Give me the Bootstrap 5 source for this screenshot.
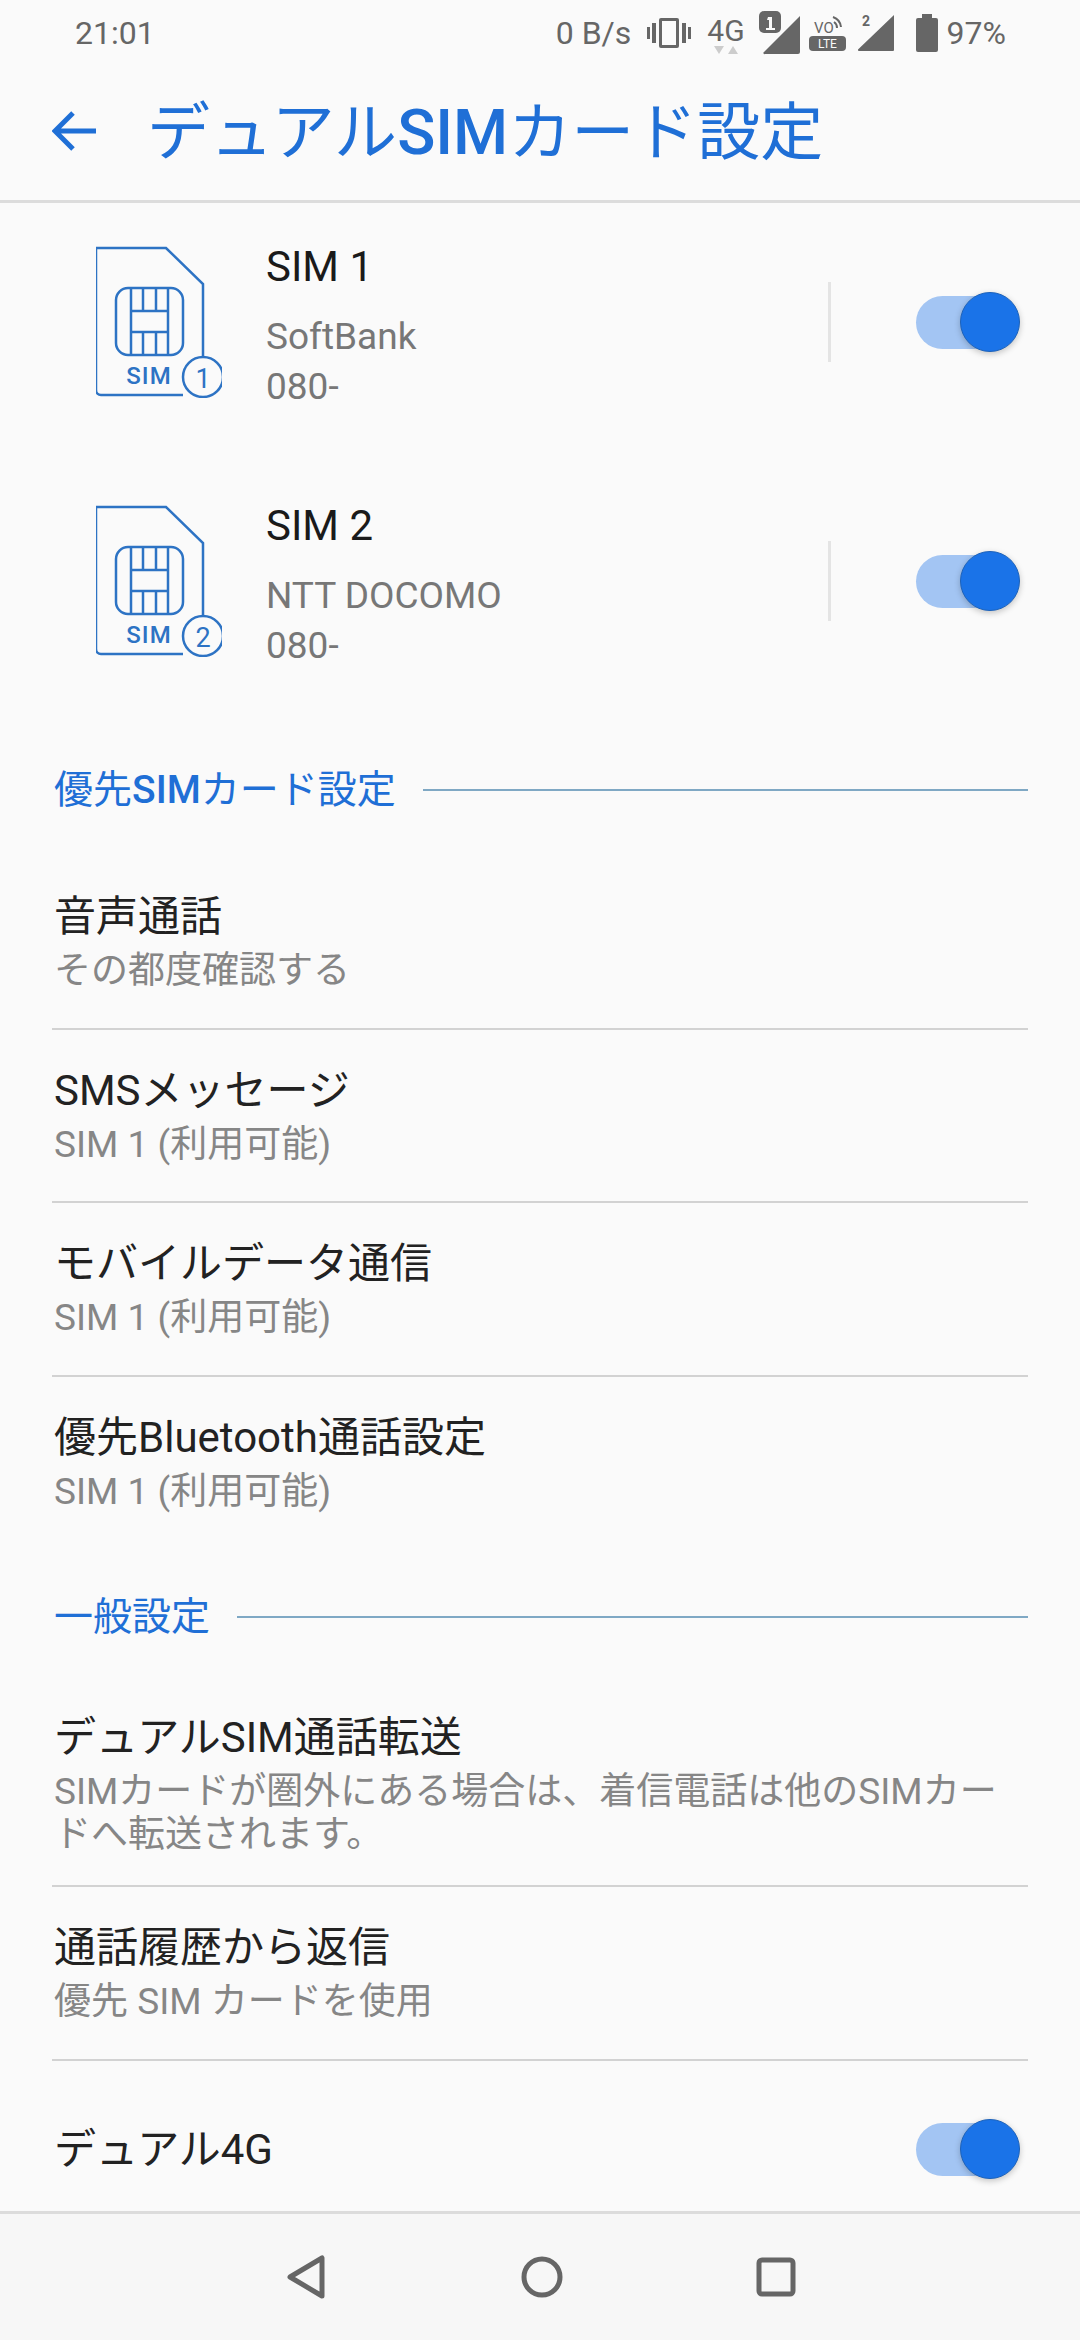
<!DOCTYPE html>
<html lang="ja">
<head>
    <meta charset="UTF-8">
    <meta name="viewport" content="width=device-width, initial-scale=1.0">
    <title>デュアルSIMカード設定</title>
    <link href="https://cdn.jsdelivr.net/npm/bootstrap@5.3.0/dist/css/bootstrap.min.css" rel="stylesheet">
    <style>
        body { background: #fafafa; font-family: Roboto, "Noto Sans CJK JP", sans-serif; color: #222; }
        .phone { height: 2340px; width: 1080px; overflow: hidden; }

        .stat-bar { height: 62px; padding: 3px 74px 0 75px; color: #666; font-size: 32px; line-height: 1; }
        .stat-bar svg { display: block; flex-shrink: 0; }

        .top-bar { height: 141px; border-bottom: 3px solid #dcdcdc; padding-left: 52px; color: #1f6fd6; }
        .top-bar h1 { font-size: 63px; font-weight: 400; margin: 3px 0 0 51px; line-height: 1; }
        .top-bar b, .sect-head b { font-weight: 500; }

        .scroll-area { overflow: hidden; }

        .sim-row { height: 238px; margin-bottom: 21px; padding-left: 96px; }
        .sim-info { margin-left: 44px; width: 562px; flex-shrink: 0; }
        .sim-name { font-size: 42px; line-height: 50px; color: #1a1a1a; margin-top: 10px; margin-bottom: 20px; }
        .sim-sub { font-size: 37px; line-height: 50px; color: #777; }
        .sim-split { width: 3px; height: 80px; background: #e4e4e4; margin-right: 85px; }

        .switch-track { width: 96px; height: 53px; border-radius: 27px; background: #a3c5f3; flex-shrink: 0; }
        .switch-knob { width: 60px; height: 60px; border-radius: 50%; background: #1a73e8; border: 1px solid #1c62ba; margin-right: -8px; flex-shrink: 0; box-shadow: 0 2px 6px rgba(0,0,0,.22); }

        .sect-head { margin: 63px 52px 39px 54px; line-height: 54px; font-size: 39px; color: #1f6fd6; }
        .sect-rule { height: 2px; background: #7fa8c4; margin-left: 27px; }
        .sect-second { margin-top: 42px; margin-bottom: 33px; }

        .set-list { margin: 0 52px 0 52px; background: transparent; }
        .set-list .list-group-item { background: transparent; padding: 28px 0 35.500px 2px; border-color: #d2d2d2; border-width: 0 0 2px; color: inherit; border-radius: 0; }
        .set-list .list-group-item:last-child { border-bottom: 0; }
        .set-list .set-wrap { padding-bottom: 29px; }
        .set-list .set-single { padding-top: 56px; }
        .set-title { font-size: 42px; line-height: 65px; color: #222; }
        .set-sub { font-size: 37px; line-height: 43px; color: #868686; }

        .nav-foot { height: 129px; background: #f7f7f7; border-top: 3px solid #dcdcdc; flex-shrink: 0; padding-left: 285px; padding-right: 284px; }
    </style>
</head>
<body>
<div class="phone d-flex flex-column">

    <div class="stat-bar d-flex align-items-center justify-content-between flex-shrink-0">
        <span>21:01</span>
        <div class="d-flex align-items-center">
            <span>0 B/s</span>
            <svg class="ms-3" width="44" height="32" viewBox="0 0 44 32" fill="#666"><path d="M14 1h16a2 2 0 0 1 2 2v26a2 2 0 0 1-2 2H14a2 2 0 0 1-2-2V3a2 2 0 0 1 2-2zm1 3v24h14V4z"/><rect x="5" y="6" width="4" height="20"/><rect x="0" y="10" width="3" height="12"/><rect x="35" y="6" width="4" height="20"/><rect x="41" y="10" width="3" height="12"/></svg>
            <span class="d-flex flex-column align-items-center" style="margin-left:16px">
                <span style="font-size:30px;line-height:28px;margin-top:6px">4G</span>
                <svg width="26" height="10" viewBox="0 0 26 10" fill="#ccc"><path d="M1 1h10l-5 8zM15 9h10l-5-8z"/></svg>
            </span>
            <svg style="margin-left:14px" width="42" height="44" viewBox="0 0 42 44" fill="#666"><path d="M41 5v36a2 2 0 0 1-2 2H6a1 1 0 0 1-1-2z"/><path d="M3 25 27 8V0H0v25z" fill="#fafafa"/><rect x="0" y="0" width="22" height="22" rx="5"/><path d="M9 6h4v11h3v2H7v-2h3V9H8z" fill="#fafafa"/></svg>
            <svg style="margin-left:8px" width="38" height="38" viewBox="0 0 38 38" fill="#666"><path d="M24 3a12 12 0 0 1 8 10M25 8a7 7 0 0 1 3 6" fill="none" stroke="#666" stroke-width="2"/><text x="5" y="19" font-family="Roboto" font-size="15">VO</text><rect x="0" y="22" width="37" height="15" rx="4"/><text x="18.500" y="34" font-family="Roboto" font-size="12" fill="#fafafa" text-anchor="middle">LTE</text></svg>
            <svg style="margin-left:11px" width="37" height="40" viewBox="0 0 37 40" fill="#666"><path d="M36 2v35a1 1 0 0 1-1 1H1a1 1 0 0 1-1-1.500z"/><path d="M0 0h22L0 24z" fill="#fafafa"/><text x="4" y="13" font-family="Roboto" font-weight="700" font-size="14">2</text></svg>
            <svg style="margin-left:21px" width="22" height="38" viewBox="0 0 22 38" fill="#666"><path d="M6 0h10v4h4a2 2 0 0 1 2 2v30a2 2 0 0 1-2 2H2a2 2 0 0 1-2-2V6a2 2 0 0 1 2-2h4z"/></svg>
            <span style="margin-left:9px">97%</span>
        </div>
    </div>

    <div class="top-bar d-flex align-items-center flex-shrink-0">
        <svg width="44" height="44" viewBox="0 0 44 44" fill="none" stroke="#1f6fd6" stroke-width="5"><path d="M44 22H4M21 4 3 22l18 18"/></svg>
        <h1>デュアル<b>SIM</b>カード設定</h1>
    </div>

    <div class="scroll-area flex-grow-1">
        <div class="sim-row d-flex align-items-center">
            <svg width="126" height="152" viewBox="96 246 126 152" fill="none" stroke="#2d73c4" stroke-width="2.500" class="flex-shrink-0">
                <path d="M183 395h-82a5 5 0 0 1-5-5V248h70l37 36v74"/>
                <rect x="116" y="288" width="67" height="67" rx="12"/>
                <path d="M131 288v67M143 288v23M143 332v23M156 288v23M156 332v23M168 288v67M131 311h37M131 332h37"/>
                <circle cx="203" cy="377" r="20"/>
                <text x="149" y="384" fill="#2d73c4" stroke="none" text-anchor="middle" font-family="Roboto" font-weight="500" font-size="24" letter-spacing="1">SIM</text>
                <text x="203" y="388" fill="#2d73c4" stroke="none" text-anchor="middle" font-family="Roboto" font-size="27">1</text>
            </svg>
            <div class="sim-info">
                <div class="sim-name">SIM 1</div>
                <div class="sim-sub">SoftBank</div>
                <div class="sim-sub">080-</div>
            </div>
            <div class="sim-split flex-shrink-0"></div>
            <div class="switch-track d-flex align-items-center justify-content-end"><div class="switch-knob"></div></div>
        </div>
        <div class="sim-row d-flex align-items-center">
            <svg width="126" height="152" viewBox="96 246 126 152" fill="none" stroke="#2d73c4" stroke-width="2.500" class="flex-shrink-0">
                <path d="M183 395h-82a5 5 0 0 1-5-5V248h70l37 36v74"/>
                <rect x="116" y="288" width="67" height="67" rx="12"/>
                <path d="M131 288v67M143 288v23M143 332v23M156 288v23M156 332v23M168 288v67M131 311h37M131 332h37"/>
                <circle cx="203" cy="377" r="20"/>
                <text x="149" y="384" fill="#2d73c4" stroke="none" text-anchor="middle" font-family="Roboto" font-weight="500" font-size="24" letter-spacing="1">SIM</text>
                <text x="203" y="388" fill="#2d73c4" stroke="none" text-anchor="middle" font-family="Roboto" font-size="27">2</text>
            </svg>
            <div class="sim-info">
                <div class="sim-name">SIM 2</div>
                <div class="sim-sub">NTT DOCOMO</div>
                <div class="sim-sub">080-</div>
            </div>
            <div class="sim-split flex-shrink-0"></div>
            <div class="switch-track d-flex align-items-center justify-content-end"><div class="switch-knob"></div></div>
        </div>

        <div class="sect-head d-flex align-items-center">
            <span>優先<b>SIM</b>カード設定</span>
            <div class="sect-rule flex-grow-1"></div>
        </div>
        <div class="list-group list-group-flush set-list">
            <div class="list-group-item"><div class="set-title">音声通話</div><div class="set-sub">その都度確認する</div></div>
            <div class="list-group-item"><div class="set-title">SMSメッセージ</div><div class="set-sub">SIM 1 (利用可能)</div></div>
            <div class="list-group-item"><div class="set-title">モバイルデータ通信</div><div class="set-sub">SIM 1 (利用可能)</div></div>
            <div class="list-group-item"><div class="set-title">優先Bluetooth通話設定</div><div class="set-sub">SIM 1 (利用可能)</div></div>
        </div>

        <div class="sect-head sect-second d-flex align-items-center">
            <span>一般設定</span>
            <div class="sect-rule flex-grow-1"></div>
        </div>
        <div class="list-group list-group-flush set-list">
            <div class="list-group-item set-wrap"><div class="set-title">デュアルSIM通話転送</div><div class="set-sub">SIMカードが圏外にある場合は、着信電話は他のSIMカードへ転送されます。</div></div>
            <div class="list-group-item"><div class="set-title">通話履歴から返信</div><div class="set-sub">優先 SIM カードを使用</div></div>
            <div class="list-group-item set-single d-flex align-items-center justify-content-between">
                <div class="set-title">デュアル4G</div>
                <div class="switch-track me-3 d-flex align-items-center justify-content-end"><div class="switch-knob"></div></div>
            </div>
        </div>
    </div>

    <div class="nav-foot d-flex align-items-center justify-content-between">
        <svg width="42" height="44" viewBox="0 0 42 44" fill="none" stroke="#666" stroke-width="5" stroke-linejoin="round"><path d="M5 22 37 3v38z"/></svg>
        <svg width="44" height="44" viewBox="0 0 44 44" fill="none" stroke="#666" stroke-width="5"><circle cx="22" cy="22" r="18"/></svg>
        <svg width="40" height="40" viewBox="0 0 40 40" fill="none" stroke="#666" stroke-width="5"><rect x="3" y="3" width="34" height="34" rx="3"/></svg>
    </div>
</div>
<script src="https://cdn.jsdelivr.net/npm/bootstrap@5.3.0/dist/js/bootstrap.bundle.min.js"></script>
</body>
</html>
